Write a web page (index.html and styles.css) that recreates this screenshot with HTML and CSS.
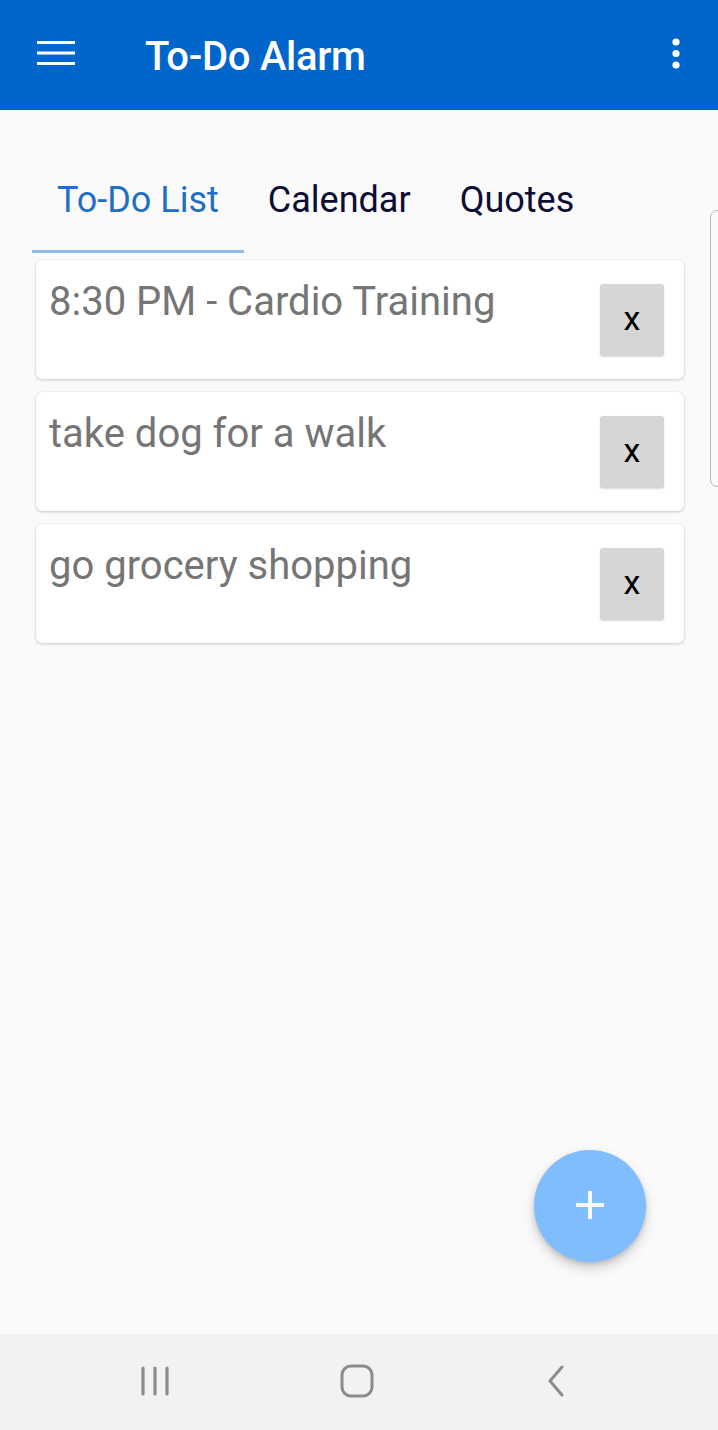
FILE: index.html
```html
<!DOCTYPE html>
<html>
<head>
<meta charset="utf-8">
<link rel="stylesheet" href="styles.css">
</head>
<body>
<div class="screen">
  <header class="appbar">
    <svg class="menu" width="38" height="26" viewBox="0 0 38 26"><rect x="0" y="1" width="38" height="3" fill="#fff"/><rect x="0" y="11.5" width="38" height="3" fill="#fff"/><rect x="0" y="22" width="38" height="3" fill="#fff"/></svg>
    <h1 class="title">To-Do Alarm</h1>
    <svg class="kebab" width="8" height="32" viewBox="0 0 8 32"><circle cx="4" cy="4" r="3.6" fill="#fff"/><circle cx="4" cy="15.5" r="3.6" fill="#fff"/><circle cx="4" cy="27" r="3.6" fill="#fff"/></svg>
  </header>
  <main class="content">
    <nav class="tabs">
      <div class="tab active">To-Do List</div>
      <div class="tab">Calendar</div>
      <div class="tab">Quotes</div>
    </nav>
    <ul class="list">
      <li class="card"><span class="card-text">8:30 PM - Cardio Training</span><button class="del">x</button></li>
      <li class="card"><span class="card-text">take dog for a walk</span><button class="del">x</button></li>
      <li class="card"><span class="card-text">go grocery shopping</span><button class="del">x</button></li>
    </ul>
    <div class="fab"><svg width="30" height="30" viewBox="0 0 30 30"><rect x="13" y="1" width="4" height="28" fill="#f4f9ff"/><rect x="1" y="13" width="28" height="4" fill="#f4f9ff"/></svg></div>
    <div class="edge"></div>
  </main>
  <footer class="navbar">
    <svg width="30" height="32" viewBox="0 0 30 32"><line x1="3" y1="3" x2="3" y2="29" stroke="#8c8c8c" stroke-width="3.2" stroke-linecap="round"/><line x1="15" y1="3" x2="15" y2="29" stroke="#8c8c8c" stroke-width="3.2" stroke-linecap="round"/><line x1="27" y1="3" x2="27" y2="29" stroke="#8c8c8c" stroke-width="3.2" stroke-linecap="round"/></svg>
    <svg width="36" height="36" viewBox="0 0 36 36"><rect x="3" y="3" width="30" height="30" rx="9" fill="none" stroke="#8c8c8c" stroke-width="3"/></svg>
    <svg width="24" height="34" viewBox="0 0 24 34"><polyline points="18,3 6,17 18,31" fill="none" stroke="#8c8c8c" stroke-width="3" stroke-linecap="round" stroke-linejoin="round"/></svg>
  </footer>
</div>
</body>
</html>
```
FILE: styles.css
```css
* { box-sizing: border-box; }
html, body { margin: 0; padding: 0; }
body { background: #fafafa; font-family: Roboto, "Liberation Sans", sans-serif; }
.screen { width: 718px; height: 1430px; display: flex; flex-direction: column; overflow: hidden; }
.appbar { height: 110px; background: #0066cc; display: flex; align-items: center; padding: 0 38px 0 37px; flex: none; }
.menu { display: block; margin-top: -4px; }
.title { margin: 4px 0 0 70px; color: #fff; font-size: 40px; font-weight: 500; flex: 1; letter-spacing: -0.3px; line-height: 48px; }
.kebab { display: block; margin-top: -2px; }
.content { flex: 1; position: relative; background: #fafafa; }
.tabs { display: flex; margin: 0 0 0 32px; padding-top: 66px; }
.tab { font-size: 36px; color: #0d0d33; padding: 0 25px; height: 77px; line-height: 48px; border-bottom: 3px solid transparent; }
.tab + .tab { padding-left: 24px; }
.tab.active { color: #1f6fc4; border-bottom-color: #8bbff0; }
.list { list-style: none; margin: 7px 0 0 36px; padding: 0; width: 648px; display: flex; flex-direction: column; gap: 13px; }
.card { height: 119px; background: #fff; border-radius: 6px; box-shadow: 0 1px 3px rgba(0,0,0,0.2), 0 0 1px rgba(0,0,0,0.12); display: flex; justify-content: space-between; align-items: flex-start; padding: 0 20px 0 13px; }
.card-text { font-size: 40px; color: #757575; margin-top: 21px; line-height: 42px; }
.del { margin-top: 24px; width: 64px; height: 72px; border: none; border-radius: 3px; background: #d6d6d6; font-family: Roboto, "Liberation Sans", sans-serif; font-size: 34px; color: #000; box-shadow: 0 1px 2px rgba(0,0,0,0.15); padding: 0 0 4px; }
.fab { position: absolute; left: 534px; top: 1040px; width: 112px; height: 112px; border-radius: 50%; background: #80bdfe; display: flex; align-items: center; justify-content: center; box-shadow: 0 6px 12px rgba(0,0,0,0.18), 0 2px 4px rgba(0,0,0,0.12); }
.fab svg { display: block; margin-top: -2px; }
.edge { position: absolute; left: 710px; top: 100px; width: 16px; height: 277px; border: 1px solid #b8b8b8; border-radius: 7px; }
.navbar { height: 96px; background: #f2f2f2; flex: none; display: flex; align-items: center; justify-content: space-between; padding: 0 150px 0 140px; }
.navbar svg { display: block; margin-top: -2px; }
```
